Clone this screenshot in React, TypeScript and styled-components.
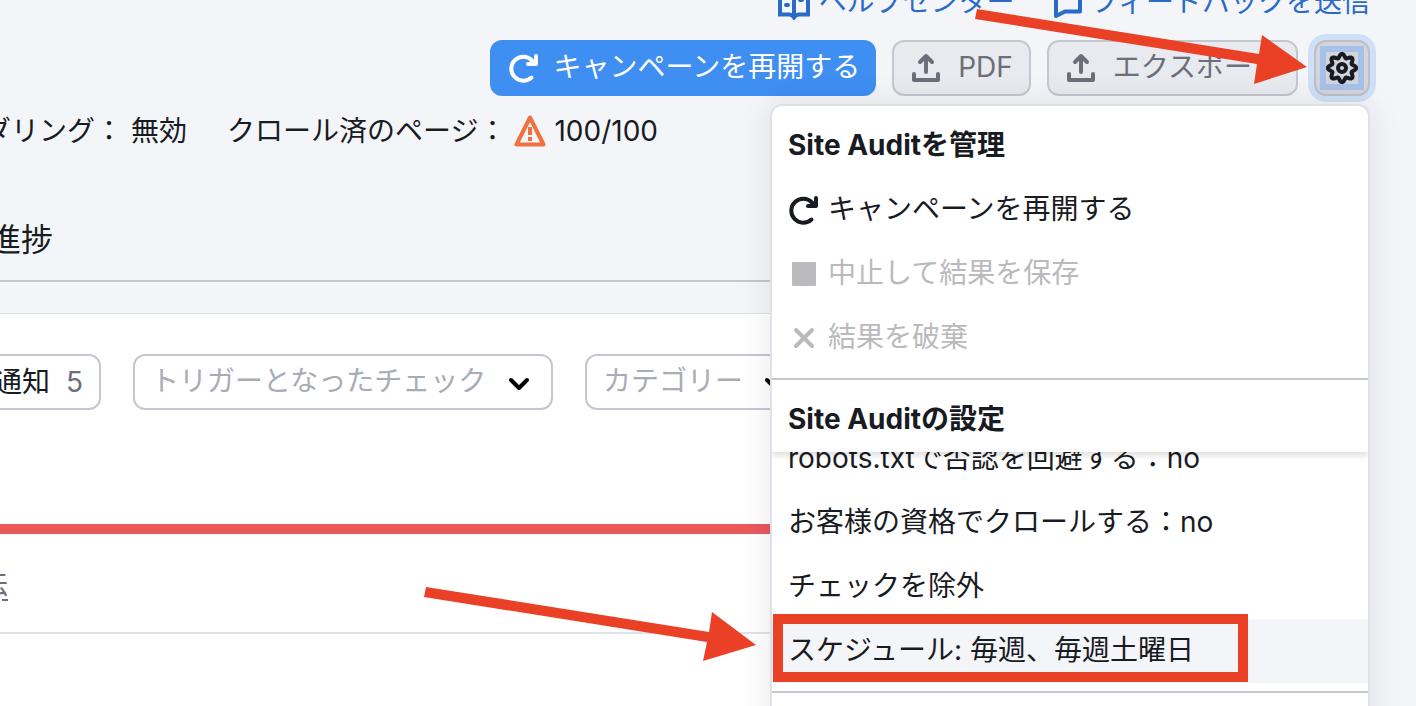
import React from 'react';
import styled, { createGlobalStyle, css } from 'styled-components';

const GlobalStyle = createGlobalStyle`
  *, *::before, *::after { box-sizing: border-box; }
  body {
    margin: 0;
    background: #f4f5f9;
    color: #191b23;
    font: 400 28px/40px Inter, "Noto Sans CJK JP", sans-serif;
  }
  button, select { font: inherit; color: inherit; }
`;

const Page = styled.div`
  height: 100vh;
  overflow: hidden;
  white-space: nowrap;
`;

const Header = styled.header`
  padding-right: 46px;
`;

const HelpLinks = styled.nav`
  display: flex;
  justify-content: flex-end;
  align-items: flex-end;
  gap: 38px;
  height: 22px;
`;

const HelpLink = styled.a`
  display: flex;
  align-items: center;
  gap: 8px;
  color: #2a6bc8;
  text-decoration: none;
`;

const Toolbar = styled.div`
  display: flex;
  justify-content: flex-end;
  gap: 16px;
  margin-top: 18px;
`;

const Button = styled.button<{ $primary?: boolean }>`
  display: flex;
  align-items: center;
  gap: 16px;
  height: 56px;
  padding: 0 16px;
  border: 2px solid #c4c7cf;
  border-radius: 12px;
  background: #e9eaef;
  color: #6c6e79;
  ${(p) =>
    p.$primary &&
    css`
      padding: 0 14px 0 16px;
      gap: 14px;
      border-color: #3f8ef2;
      background: #3f8ef2;
      color: #fff;
    `}
`;

const ButtonLabel = styled.span`
  margin-top: -2px;
`;

const SettingsAnchor = styled.div`
  position: relative;
  z-index: 1;
`;

const GearButton = styled.button`
  display: grid;
  place-items: center;
  width: 56px;
  height: 56px;
  padding: 0;
  border: 2px solid #bec0c8;
  border-radius: 12px;
  background: #d3d5dc;
  box-shadow: 0 0 0 6px #cfe0f6;
`;

const GearFocus = styled.span`
  display: grid;
  place-items: center;
  width: 44px;
  height: 44px;
  border: 6px solid #a8c1e8;
`;

const Menu = styled.div`
  position: absolute;
  top: 64px;
  right: 0;
  width: 600px;
  border: 2px solid #dfe0e8;
  border-radius: 12px;
  background: #fff;
  box-shadow: 0 0 32px rgba(25, 27, 35, 0.1);
`;

const MenuSection = styled.section`
  min-height: 64px;
  padding: 8px 0;
  & + & { border-top: 2px solid #c4c7cf; }
`;

const MenuHeading = styled.h2`
  margin: 0;
  padding: 11px 16px 13px;
  font-size: 28px;
  line-height: 40px;
  font-weight: 700;
`;

const StickyHeading = styled(MenuHeading)`
  position: relative;
  z-index: 1;
  box-shadow: 0 4px 6px rgba(0, 0, 0, 0.12);
  clip-path: inset(0 0 -12px 0);
`;

const MenuItem = styled.button<{ $active?: boolean }>`
  position: relative;
  display: flex;
  flex: none;
  align-items: center;
  gap: 8px;
  width: 100%;
  height: 64px;
  padding: 0 16px;
  border: 0;
  background: ${(p) => (p.$active ? '#f4f5f9' : 'transparent')};
  text-align: left;
  &:disabled { color: #bababd; }
`;

const ItemLabel = styled.span`
  margin-top: -2px;
`;

const ScrollArea = styled.div`
  display: flex;
  flex-direction: column;
  justify-content: flex-end;
  height: 231px;
  overflow: hidden;
`;

const Highlight = styled.span`
  position: absolute;
  top: -5px;
  left: 1px;
  width: 475px;
  height: 68px;
  border: 10px solid #ea4126;
`;

const GearArrow = styled.svg`
  position: absolute;
  top: -35px;
  right: 60px;
  pointer-events: none;
`;

const ScheduleArrow = styled.svg`
  position: absolute;
  top: 474px;
  right: 608px;
  pointer-events: none;
`;

const MetaRow = styled.div`
  display: flex;
  align-items: center;
  gap: 40px;
  margin: 15px 0 0 -17px;
`;

const Meta = styled.div`
  display: flex;
  align-items: center;
  gap: 8px;
`;

const Tabs = styled.nav`
  margin: 69px 46px 0 0;
  padding-bottom: 20px;
  border-bottom: 2px solid #c4c7cf;
`;

const Tab = styled.a`
  display: block;
  margin-left: -11px;
  color: inherit;
  font-size: 32px;
  line-height: 40px;
  text-decoration: none;
`;

const Card = styled.main`
  margin: 31px 46px 0 0;
  min-height: 400px;
  border-top: 1px solid #e0e1e9;
  background: #fff;
`;

const Filters = styled.div`
  display: flex;
  gap: 32px;
  padding: 40px 0 0;
`;

const Pill = styled.button`
  display: flex;
  align-items: center;
  gap: 16px;
  height: 56px;
  margin-left: -24px;
  padding: 0 16px;
  border: 2px solid #c4c7cf;
  border-radius: 12px;
  background: #fff;
`;

const Count = styled.span`
  color: #6c6e79;
`;

const SelectBox = styled.label<{ $width: number }>`
  position: relative;
  width: ${(p) => p.$width}px;
  svg {
    position: absolute;
    top: 23px;
    right: 23px;
    pointer-events: none;
  }
`;

const Select = styled.select`
  appearance: none;
  width: 100%;
  height: 56px;
  padding: 0 16px 2px;
  border: 2px solid #c4c7cf;
  border-radius: 12px;
  background: #fff;
  color: #a9abb6;
`;

const Table = styled.table`
  width: 100%;
  margin-top: 114px;
  border-spacing: 0;
  border-top: 10px solid #eb585b;
`;

const HeadCell = styled.th`
  height: 100px;
  padding: 2px 0 0;
  border-bottom: 2px solid #e0e1e9;
  color: #6c6e79;
  font-weight: 400;
  text-align: left;
`;

const Term = styled.span`
  display: inline-block;
  margin-left: -20px;
  border-bottom: 2px dashed #6c6e79;
  line-height: 30px;
`;

const Reload = () => (
  <svg width="32" height="32" viewBox="0 0 32 32" fill="none" stroke="currentColor" strokeWidth="4" strokeLinecap="round" strokeLinejoin="round">
    <path d="M23.500 25.500A12 12 0 1 1 24 8.500l2 2" />
    <path d="M28 4v8h-8" />
  </svg>
);

const Upload = () => (
  <svg width="32" height="32" viewBox="0 0 32 32" fill="none" stroke="currentColor" strokeWidth="4" strokeLinecap="round" strokeLinejoin="round">
    <path d="M16 20V5M10 10l6-6 6 6" />
    <path d="M4 22v6h24v-6" />
  </svg>
);

const gearOutline = Array.from({ length: 96 }, (_, i) => {
  const angle = (i / 96) * 2 * Math.PI;
  const radius = 12.3 + 1.9 * Math.cos(8 * angle);
  return `${(16 + radius * Math.sin(angle)).toFixed(2)},${(16 - radius * Math.cos(angle)).toFixed(2)}`;
}).join(' ');

const Gear = () => (
  <svg width="32" height="32" viewBox="0 0 32 32" fill="none" stroke="#191b23" strokeWidth="4" strokeLinejoin="round">
    <polygon points={gearOutline} />
    <circle cx="16" cy="16" r="4" />
  </svg>
);

const Book = () => (
  <svg width="34" height="36" viewBox="0 0 34 36" fill="none" stroke="currentColor" strokeWidth="4">
    <path d="M3 2v28.500h9q3 0 5 3 2-3 5-3h9V2H20l-3 3-3-3zM17 4v28" />
    <path d="M9 12h2M9 21h2M23 7h2M23 16h2" strokeLinecap="round" />
  </svg>
);

const Chat = () => (
  <svg width="30" height="32" viewBox="0 0 30 32" fill="none" stroke="currentColor" strokeWidth="4">
    <path d="M3 3h24v22.500H12l-9 4.500z" strokeLinejoin="round" />
  </svg>
);

const Warning = () => (
  <svg width="32" height="32" viewBox="0 0 32 32" fill="none" stroke="#f2703f" strokeWidth="4" strokeLinejoin="round">
    <path d="M16 2.500L2.500 29.500h27z" />
    <path d="M16 12v8M16 22v4" />
  </svg>
);

const Stop = () => (
  <svg width="32" height="32" viewBox="0 0 32 32" fill="currentColor">
    <rect x="4" y="4" width="24" height="24" rx="1" />
  </svg>
);

const Cross = () => (
  <svg width="32" height="32" viewBox="0 0 32 32" fill="none" stroke="currentColor" strokeWidth="4" strokeLinecap="round">
    <path d="M8 8l16 16M24 8L8 24" />
  </svg>
);

const Chevron = () => (
  <svg width="22" height="14" viewBox="0 0 22 14" fill="none" stroke="#000" strokeWidth="4" strokeLinecap="round" strokeLinejoin="round">
    <path d="M3 3l8 8 8-8" />
  </svg>
);

export default function App() {
  return (
    <Page>
      <GlobalStyle />
      <Header>
        <HelpLinks>
          <HelpLink href="#help"><Book />ヘルプセンター</HelpLink>
          <HelpLink href="#feedback"><Chat />フィードバックを送信</HelpLink>
        </HelpLinks>
        <Toolbar>
          <Button $primary><Reload /><ButtonLabel>キャンペーンを再開する</ButtonLabel></Button>
          <Button><Upload /><ButtonLabel>PDF</ButtonLabel></Button>
          <Button><Upload /><ButtonLabel>エクスポート</ButtonLabel></Button>
          <SettingsAnchor>
            <GearButton aria-label="設定"><GearFocus><Gear /></GearFocus></GearButton>
            <Menu>
              <MenuSection>
                <MenuHeading>Site Auditを管理</MenuHeading>
                <MenuItem><Reload /><ItemLabel>キャンペーンを再開する</ItemLabel></MenuItem>
                <MenuItem disabled><Stop /><ItemLabel>中止して結果を保存</ItemLabel></MenuItem>
                <MenuItem disabled><Cross /><ItemLabel>結果を破棄</ItemLabel></MenuItem>
              </MenuSection>
              <MenuSection>
                <StickyHeading>Site Auditの設定</StickyHeading>
                <ScrollArea>
                  <MenuItem><ItemLabel>robots.txtで否認を回避する：no</ItemLabel></MenuItem>
                  <MenuItem><ItemLabel>お客様の資格でクロールする：no</ItemLabel></MenuItem>
                  <MenuItem><ItemLabel>チェックを除外</ItemLabel></MenuItem>
                  <MenuItem $active><ItemLabel>スケジュール: 毎週、毎週土曜日</ItemLabel><Highlight /></MenuItem>
                </ScrollArea>
              </MenuSection>
              <MenuSection />
              <ScheduleArrow width="340" height="90" viewBox="420 580 340 90" fill="#ea4126">
                <path d="M426 587L709 632 712 612 756 645 703 661 707 642 424 597z" />
              </ScheduleArrow>
            </Menu>
            <GearArrow width="340" height="90" viewBox="970 5 340 90" fill="#ea4126">
              <path d="M977 9L1259 54 1262 35 1307 67 1254 84 1257 64 975 19z" />
            </GearArrow>
          </SettingsAnchor>
        </Toolbar>
      </Header>
      <MetaRow>
        <Meta><span>ダリング：</span><span>無効</span></Meta>
        <Meta><span>クロール済のページ：</span><Warning /><span>100/100</span></Meta>
      </MetaRow>
      <Tabs><Tab href="#progress">進捗</Tab></Tabs>
      <Card>
        <Filters>
          <Pill><span>通知</span><Count>5</Count></Pill>
          <SelectBox $width={420}>
            <Select aria-label="トリガーとなったチェック"><option>トリガーとなったチェック</option></Select>
            <Chevron />
          </SelectBox>
          <SelectBox $width={224}>
            <Select aria-label="カテゴリー"><option>カテゴリー</option></Select>
            <Chevron />
          </SelectBox>
        </Filters>
        <Table>
          <thead><tr><HeadCell scope="col"><Term>法</Term></HeadCell></tr></thead>
        </Table>
      </Card>
    </Page>
  );
}
